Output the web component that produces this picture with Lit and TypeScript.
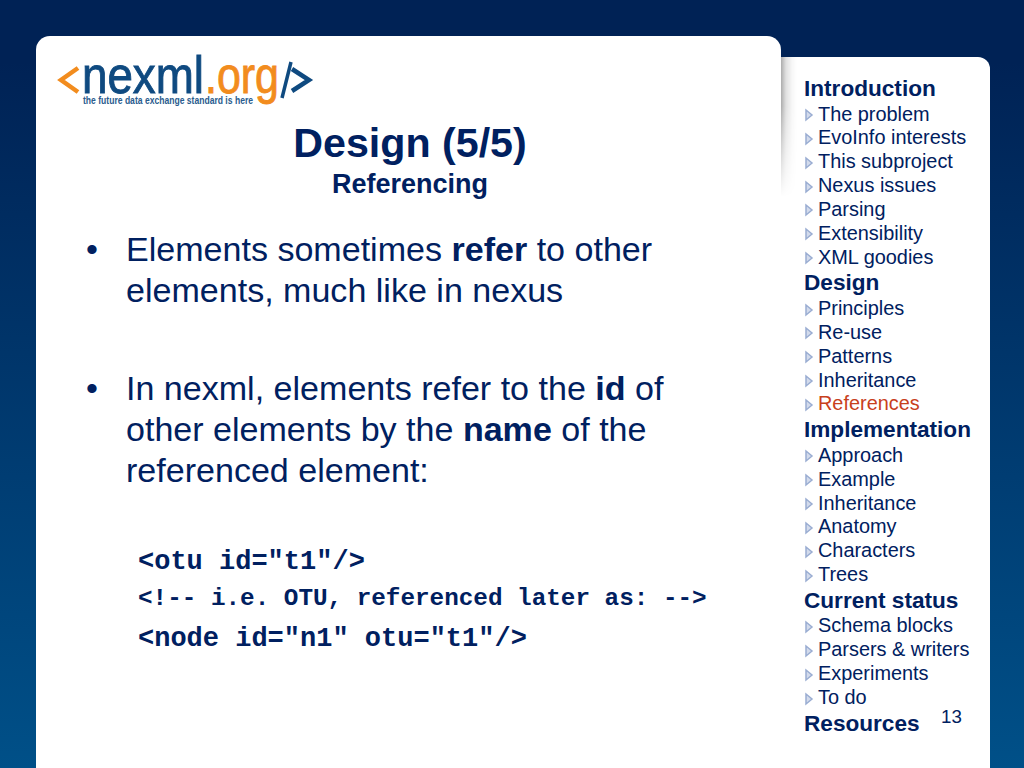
import { LitElement, html, css, svg } from "lit";
import { customElement } from "lit/decorators.js";

type Item = { t: string; h?: boolean; a?: boolean };
const nav: Item[] = [
  { t: "Introduction", h: true }, { t: "The problem" }, { t: "EvoInfo interests" }, { t: "This subproject" },
  { t: "Nexus issues" }, { t: "Parsing" }, { t: "Extensibility" }, { t: "XML goodies" },
  { t: "Design", h: true }, { t: "Principles" }, { t: "Re-use" }, { t: "Patterns" }, { t: "Inheritance" },
  { t: "References", a: true },
  { t: "Implementation", h: true }, { t: "Approach" }, { t: "Example" }, { t: "Inheritance" }, { t: "Anatomy" },
  { t: "Characters" }, { t: "Trees" },
  { t: "Current status", h: true }, { t: "Schema blocks" }, { t: "Parsers & writers" }, { t: "Experiments" }, { t: "To do" },
  { t: "Resources", h: true },
];

@customElement("app-root")
export class AppRoot extends LitElement {
  static styles = css`
    :host {
      display: block; width: 1024px; height: 768px; overflow: hidden; position: relative;
      font-family: "Liberation Sans", Arial, sans-serif; color: #002060;
      background: linear-gradient(180deg, #002255 0%, #002255 8%, #005088 100%);
    }
    .stage { display: flex; align-items: flex-start; height: 768px; padding: 36px 0 0 36px; box-sizing: border-box; }
    .main {
      width: 745px; height: 760px; flex: none; background: #fff; border-radius: 14px 14px 0 0;
      box-sizing: border-box; display: flex; flex-direction: column; position: relative; z-index: 1;
    }
    .logo { display: block; margin: 18px 0 0 19px; flex: none; }
    .logo text { font-family: "Liberation Sans", Arial, sans-serif; }
    .title { text-align: center; margin: 10px 0 0 0; font-weight: bold; width: 748px; color: #002060; }
    .title .big { font-size: 41.2px; line-height: 46px; }
    .title .sub { font-size: 27px; line-height: 30px; margin-top: 3px; }
    .body { padding: 30px 0 0 49px; font-size: 34.05px; line-height: 41px; color: #002060; }
    .bullet { display: flex; width: 620px; margin-bottom: 57px; }
    .bullet.last { margin-bottom: 52px; }
    .bullet .dot { width: 40px; padding-left: 1px; flex: none; }
    .bullet b { font-weight: bold; }
    .code { font-family: "Liberation Mono", "Courier New", monospace; font-weight: bold; font-size: 27px; line-height: 38px; color: #002060; margin-left: 53px; white-space: nowrap; }
    .code.small { font-size: 24.3px; line-height: 36px; margin-bottom: 3px; }
    .side {
      margin-top: 21px; width: 209px; height: 747px; flex: none; border-radius: 0 12px 0 0;
      background: #fff;
      box-sizing: border-box; padding: 17px 0 0 23px; position: relative;
    }
    .side::before {
      content: ""; position: absolute; left: 0; top: 0; width: 16px; height: 140px;
      background: linear-gradient(90deg, rgba(0,0,0,.32) 0, rgba(0,0,0,.12) 5px, rgba(0,0,0,.03) 11px, rgba(0,0,0,0) 16px);
      -webkit-mask-image: linear-gradient(180deg, #000 0, #000 35%, transparent 100%);
      mask-image: linear-gradient(180deg, #000 0, #000 35%, transparent 100%);
    }
    .row { display: flex; align-items: center; font-size: 19.9px; height: 23.85px; line-height: 24px; color: #002060; white-space: nowrap; position: relative; }
    .row.h { font-weight: bold; font-size: 22.6px; height: 26px; line-height: 26px; color: #002060; margin-top: 1.6px; }
    .row.a { color: #c8401c; }
    .row svg { width: 10px; height: 14px; margin: 3px 4px 0 0; flex: none; }
    .num { position: absolute; left: 160px; top: 648px; font-size: 18.7px; line-height: 24px; color: #002060; }
  `;

  logo() {
    return html`<svg class="logo" width="260" height="56" viewBox="0 0 260 56">
      <path d="M23 14 L6 26 L23 38" fill="none" stroke="#f28c1e" stroke-width="4.5"/>
      <text x="27" y="39" font-size="52" fill="#0f4a80" stroke="#0f4a80" stroke-width=".9" textLength="122" lengthAdjust="spacingAndGlyphs">nexml</text>
      <text x="150" y="39" font-size="52" fill="#f28c1e" stroke="#f28c1e" stroke-width=".9" textLength="74" lengthAdjust="spacingAndGlyphs">.org</text>
      <path d="M236 8 L227 44" fill="none" stroke="#0f4a80" stroke-width="3.5"/>
      <path d="M237 15 L254 26 L237 37" fill="none" stroke="#0f4a80" stroke-width="4.5"/>
      <text x="28" y="50" font-size="10.5" font-weight="bold" fill="#2a5c8e" textLength="170" lengthAdjust="spacingAndGlyphs">the future data exchange standard is here</text>
    </svg>`;
  }

  arrow() {
    return svg`<svg viewBox="0 0 10 14"><path d="M2 2 L8 7 L2 12 Z" fill="#d3dbec" stroke="#9aadd2" stroke-width="1.5"/></svg>`;
  }

  render() {
    return html`<div class="stage">
      <div class="main">
        ${this.logo()}
        <div class="title"><div class="big">Design (5/5)</div><div class="sub">Referencing</div></div>
        <div class="body">
          <div class="bullet"><span class="dot">•</span><span>Elements sometimes <b>refer</b> to other elements, much like in nexus</span></div>
          <div class="bullet last"><span class="dot">•</span><span>In nexml, elements refer to the <b>id</b> of other elements by the <b>name</b> of the referenced element:</span></div>
          <div class="code">&lt;otu id="t1"/&gt;</div>
          <div class="code small">&lt;!-- i.e. OTU, referenced later as: --&gt;</div>
          <div class="code">&lt;node id="n1" otu="t1"/&gt;</div>
        </div>
      </div>
      <div class="side">
        ${nav.map((n) => html`<div class="row ${n.h ? "h" : ""} ${n.a ? "a" : ""}">${n.h ? "" : this.arrow()}${n.t}</div>`)}
        <div class="num">13</div>
      </div>
    </div>`;
  }
}
